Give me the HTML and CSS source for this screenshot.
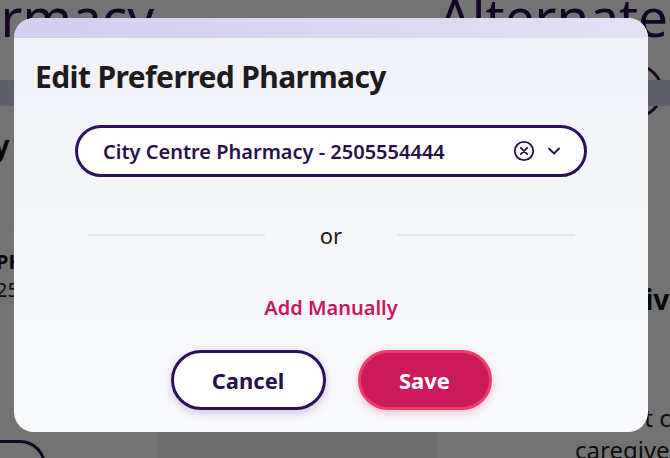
FILE: index.html
```html
<!DOCTYPE html>
<html lang="en">
<head>
<meta charset="utf-8">
<title>Edit Preferred Pharmacy</title>
<link rel="stylesheet" href="styles.css">
</head>
<body>
<div class="page">
  <div class="bg-col bg-left">
    <div class="bg-h1">Pharmacy</div>
    <div class="bg-band"></div>
    <div class="bg-h2">Pharmacy</div>
    <div class="bg-label">PHONE</div>
    <div class="bg-text">2505554444</div>
    <div class="bg-btn"></div>
  </div>
  <div class="bg-col bg-mid"></div>
  <div class="bg-col bg-right">
    <div class="bg-h1">Alternate Contact</div>
    <div class="bg-circle"></div>
    <div class="bg-band"></div>
    <div class="bg-h2">Active</div>
    <div class="bg-text">not currently a<br>caregiver</div>
  </div>
</div>
<div class="overlay"></div>
<div class="modal">
  <div class="modal-top"></div>
  <div class="modal-body">
    <h1 class="title">Edit Preferred Pharmacy</h1>
    <div class="select">
      <span class="select-value">City Centre Pharmacy - 2505554444</span>
      <span class="select-icons">
        <svg class="icon-clear" width="22" height="22" viewBox="0 0 22 22"><circle cx="11" cy="11" r="9.2" fill="none" stroke="#2a1048" stroke-width="1.8"/><path d="M7.8 7.8 L14.2 14.2 M14.2 7.8 L7.8 14.2" stroke="#2a1048" stroke-width="1.8" stroke-linecap="round"/></svg>
        <svg class="icon-chev" width="16" height="16" viewBox="0 0 16 16"><path d="M3 5.5 L8 10.5 L13 5.5" fill="none" stroke="#2a1048" stroke-width="1.8" stroke-linecap="round" stroke-linejoin="round"/></svg>
      </span>
    </div>
    <div class="divider">
      <span class="line"></span>
      <span class="or">or</span>
      <span class="line"></span>
    </div>
    <a class="add-link">Add Manually</a>
    <div class="actions">
      <button class="btn btn-cancel">Cancel</button>
      <button class="btn btn-save">Save</button>
    </div>
  </div>
</div>
</body>
</html>
```

FILE: styles.css
```css
html, body {
  margin: 0;
  padding: 0;
  width: 670px;
  height: 458px;
  overflow: hidden;
  font-family: "Noto Sans", "Open Sans", sans-serif;
}
.page {
  display: flex;
  width: 670px;
  height: 458px;
  background: #ffffff;
  position: relative;
  overflow: hidden;
}
.bg-col { position: relative; }
.bg-left { width: 157px; }
.bg-mid { width: 280px; background: #f2f2f2; margin-top: 432px; }
.bg-right { flex: 1; }
.bg-h1 {
  position: absolute;
  top: -20px;
  font-size: 53px;
  color: #2a0c55;
  white-space: nowrap;
}
.bg-left .bg-h1 { left: -94px; }
.bg-right .bg-h1 { left: 1px; }
.bg-band {
  position: absolute;
  top: 80px;
  left: 0;
  right: 0;
  height: 26px;
  background: #d6d3ef;
}
.bg-h2 {
  position: absolute;
  top: 126px;
  left: -130px;
  font-size: 28px;
  font-weight: 700;
  color: #111;
}
.bg-right .bg-h2 { top: 280px; left: 162px; }
.bg-label {
  position: absolute;
  top: 248px;
  left: -4px;
  font-size: 20px;
  font-weight: 700;
  color: #111;
}
.bg-text {
  position: absolute;
  top: 276px;
  left: -4px;
  font-size: 20px;
  color: #222;
  white-space: nowrap;
}
.bg-right .bg-text {
  top: 402px;
  left: 138px;
  line-height: 32px;
  font-size: 24px;
  text-indent: 40px;
}
.bg-btn {
  position: absolute;
  top: 440px;
  left: -60px;
  width: 100px;
  height: 50px;
  border: 3px solid #2a0c55;
  border-radius: 26px;
}
.bg-circle {
  position: absolute;
  top: 64px;
  left: 172px;
  width: 48px;
  height: 48px;
  border: 3px solid #2a0c55;
  border-radius: 50%;
}
.overlay {
  position: absolute;
  inset: 0;
  background: rgba(0, 0, 0, 0.55);
}
.modal {
  position: absolute;
  left: 14px;
  top: 18px;
  width: 634px;
  height: 414px;
  border-radius: 20px;
  overflow: hidden;
  display: flex;
  flex-direction: column;
  background: linear-gradient(180deg, #f1f2f8 0%, #f8f9fb 100%);
}
.modal-top {
  height: 20px;
  background: linear-gradient(90deg, #d2cef1 0%, #e2e1f4 100%);
}
.modal-body {
  display: flex;
  flex-direction: column;
  align-items: center;
  flex: 1;
}
.title {
  align-self: flex-start;
  margin: 19px 0 0 21px;
  font-size: 30px;
  font-weight: 700;
  color: #1f1b1d;
  letter-spacing: -0.6px;
  line-height: 40px;
}
.select {
  margin-top: 28px;
  width: 459px;
  height: 46px;
  border: 3px solid #2e0f5c;
  border-radius: 30px;
  background: #ffffff;
  display: flex;
  align-items: center;
  justify-content: space-between;
  padding: 0 22px 0 25px;
  box-sizing: content-box;
}
.select-value {
  font-size: 20px;
  font-weight: 600;
  color: #2a1048;
}
.select-icons {
  display: flex;
  align-items: center;
  gap: 11px;
}
.divider {
  margin-top: 43px;
  width: 487px;
  display: flex;
  align-items: center;
}
.line {
  flex: 1;
  height: 2px;
  background: #e6e7ee;
}
.or {
  width: 132px;
  text-align: center;
  font-size: 22px;
  color: #1d1d1d;
  line-height: 30px;
}
.add-link {
  margin-top: 44px;
  font-size: 20px;
  font-weight: 600;
  color: #c9165a;
  line-height: 28px;
}
.actions {
  margin-top: 28px;
  display: flex;
  gap: 32px;
}
.btn {
  height: 60px;
  border-radius: 30px;
  font-family: "Noto Sans", "Open Sans", sans-serif;
  font-size: 22px;
  font-weight: 700;
  box-sizing: border-box;
  cursor: pointer;
}
.btn-cancel {
  width: 155px;
  background: #ffffff;
  border: 3px solid #2e0f5c;
  color: #2a1048;
  box-shadow: 0 3px 8px rgba(80, 50, 140, 0.25);
}
.btn-save {
  width: 134px;
  background: #cb1a5a;
  border: 3px solid #f23a6c;
  color: #ffffff;
  box-shadow: 0 3px 8px rgba(220, 40, 90, 0.25);
}
```
